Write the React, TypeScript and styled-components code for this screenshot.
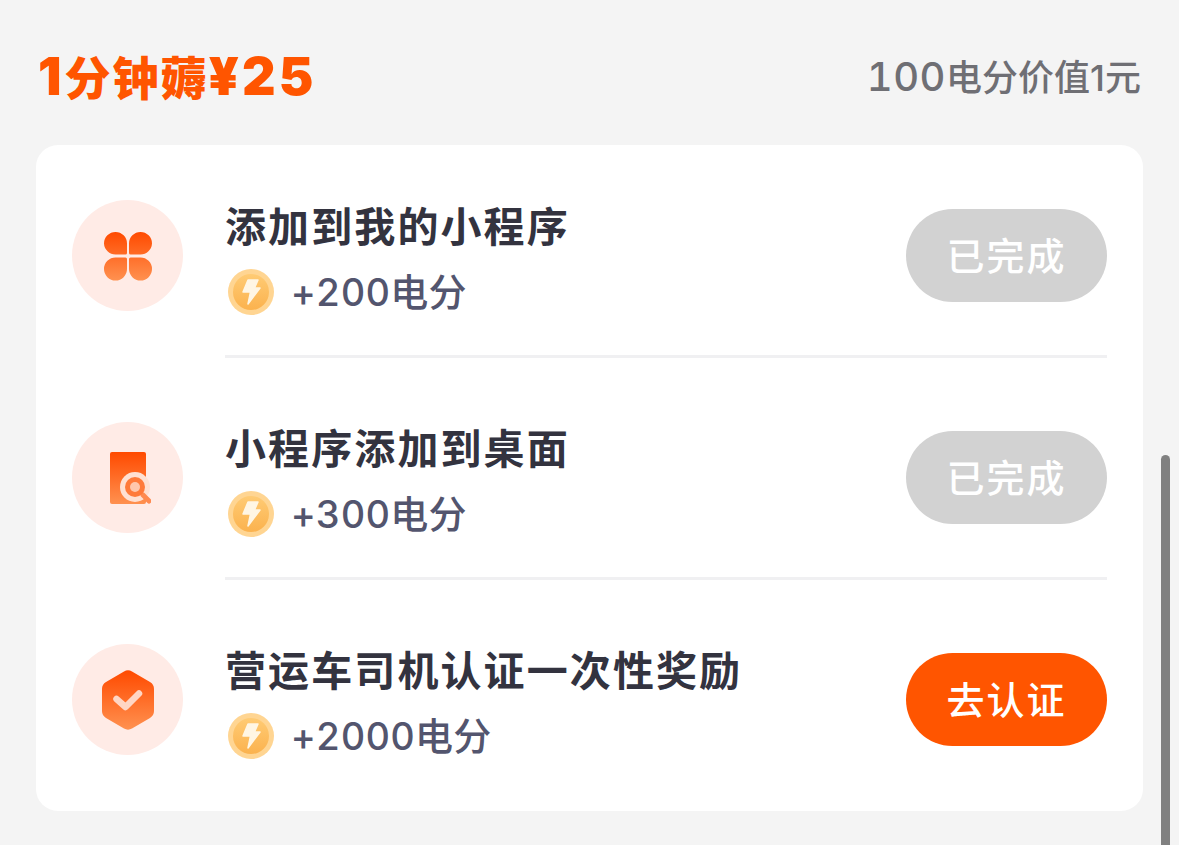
import React from "react";
import styled, { createGlobalStyle } from "styled-components";

const GlobalStyle = createGlobalStyle`
  html, body {
    margin: 0;
    padding: 0;
    height: 100%;
    overflow: hidden;
    background: #f4f4f4;
    font-family: Inter, "Noto Sans CJK SC", sans-serif;
  }
`;

const Page = styled.div`
  position: relative;
  width: 1179px;
  height: 845px;
  overflow: hidden;
  box-sizing: border-box;
  padding: 42px 36px 0;
  background: #f4f4f4;
`;

const Header = styled.div`
  display: flex;
  justify-content: space-between;
  align-items: center;
  height: 66px;
  padding: 0 2px;
  margin-bottom: 37px;
`;

const Title = styled.div`
  font-size: 46px;
  font-weight: 900;
  letter-spacing: 2px;
  color: #ff5500;
  white-space: nowrap;
`;

const TitleNumber = styled.span`
  font-size: 52px;
  letter-spacing: 3px;
`;

const Rate = styled.div`
  font-size: 36px;
  font-weight: 500;
  color: #6f6f74;
  white-space: nowrap;
`;

const RateNumber = styled.span`
  font-size: 40px;
  letter-spacing: 0.500px;
  font-variant-numeric: tabular-nums;
`;

const Card = styled.div`
  width: 1107px;
  height: 666px;
  box-sizing: border-box;
  padding: 9px 36px 0;
  background: #fff;
  border-radius: 22px;
`;

const Row = styled.div`
  display: flex;
  align-items: center;
  height: 204px;
  padding-bottom: 1px;
  margin-bottom: 18px;
  box-sizing: border-box;
`;

const Badge = styled.div`
  flex: none;
  width: 111px;
  height: 111px;
  margin-right: 42px;
  border-radius: 50%;
  background: #ffebe6;
  display: flex;
  align-items: center;
  justify-content: center;
`;

const Body = styled.div<{ $last?: boolean }>`
  flex: 1;
  height: 204px;
  margin-bottom: -1px;
  padding-top: 2px;
  display: flex;
  align-items: center;
  box-sizing: border-box;
  border-bottom: 3px solid ${(p) => (p.$last ? "transparent" : "#f0f0f2")};
`;

const Info = styled.div`
  flex: 1;
  min-width: 0;
  padding-top: 4px;
`;

const ItemTitle = styled.div`
  font-size: 41px;
  line-height: 54px;
  letter-spacing: 2.100px;
  font-weight: 700;
  color: #33333f;
  white-space: nowrap;
`;

const Reward = styled.div`
  display: flex;
  align-items: center;
  gap: 17px;
  margin-top: 15px;
  margin-left: 3px;
  font-size: 38px;
  line-height: 46px;
  letter-spacing: 0.200px;
  font-weight: 500;
  font-variant-numeric: tabular-nums;
  color: #53556e;
`;

const ActionButton = styled.div<{ $done?: boolean }>`
  flex: none;
  width: 201px;
  height: 93px;
  padding-bottom: 5px;
  box-sizing: border-box;
  border-radius: 47px;
  display: flex;
  align-items: center;
  justify-content: center;
  font-size: 38px;
  letter-spacing: 2px;
  font-weight: 500;
  color: #fff;
  background: ${(p) => (p.$done ? "#d2d2d2" : "#ff5500")};
`;

const ScrollThumb = styled.div`
  position: absolute;
  left: 1161px;
  top: 455px;
  width: 9px;
  height: 400px;
  border-radius: 5px;
  background: #808080;
`;

const IconGradient = ({ id }: { id: string }) => (
  <defs>
    <linearGradient id={id} x1="0" y1="0" x2="0" y2="1">
      <stop offset="0" stopColor="#ff4a00" />
      <stop offset="1" stopColor="#ff9150" />
    </linearGradient>
  </defs>
);

const CloverIcon = () => (
  <svg width="50" height="50" viewBox="0 0 50 50">
    <IconGradient id="clover" />
    <path
      fill="url(#clover)"
      d="M1 12.500a11.500 11.500 0 0 1 23 0V22a1.500 1.500 0 0 1-1.500 1.500h-10A11.500 11.500 0 0 1 1 12.500zM49 12.500a11.500 11.500 0 0 0-23 0V22a1.500 1.500 0 0 0 1.500 1.500h10A11.500 11.500 0 0 0 49 12.500zM1 38a11.500 11.500 0 0 1 11.500-11.500h10A1.500 1.500 0 0 1 24 28v10a11.500 11.500 0 0 1-23 0zM49 38a11.500 11.500 0 0 0-11.500-11.500h-10A1.500 1.500 0 0 0 26 28v10a11.500 11.500 0 0 0 23 0z"
    />
  </svg>
);

const SearchDocIcon = () => (
  <svg width="46" height="54" viewBox="-5 0 46 54">
    <IconGradient id="doc" />
    <path
      fill="url(#doc)"
      d="M2 1h32a2 2 0 0 1 2 2v48a2 2 0 0 1-2 2H2a2 2 0 0 1-2-2V3a2 2 0 0 1 2-2z"
    />
    <circle cx="25" cy="36" r="15" fill="#ffe0d2" />
    <path d="M33 44l6 6" stroke="#ff8a50" strokeWidth="5" strokeLinecap="round" />
    <circle cx="25" cy="36" r="10" fill="#ff7a3a" />
    <circle cx="25" cy="36" r="5" fill="#ffc7ac" />
  </svg>
);

const ShieldIcon = () => (
  <svg width="54" height="60" viewBox="0 0 54 60">
    <IconGradient id="shield" />
    <path
      fill="url(#shield)"
      d="M23 1.500a8 8 0 0 1 8 0l18 10.500a8 8 0 0 1 4 7v22a8 8 0 0 1-4 7L31 58.500a8 8 0 0 1-8 0L5 48a8 8 0 0 1-4-7V19a8 8 0 0 1 4-7z"
    />
    <path
      d="M15.500 29l9 8L38 23.500"
      fill="none"
      stroke="#ffd6c4"
      strokeWidth="6.500"
      strokeLinecap="round"
      strokeLinejoin="round"
    />
  </svg>
);

const CoinIcon = () => (
  <svg width="46" height="46" viewBox="0 0 46 46" style={{ flex: "none" }}>
    <defs>
      <linearGradient id="coin" x1="0" y1="0" x2="0" y2="1">
        <stop offset="0" stopColor="#ffcb74" />
        <stop offset="1" stopColor="#fbb24e" />
      </linearGradient>
    </defs>
    <circle cx="23" cy="23" r="23" fill="#ffd592" />
    <circle cx="23" cy="23" r="18" fill="url(#coin)" />
    <path
      fill="#fff6e4"
      strokeLinejoin="round"
      stroke="#fff6e4"
      strokeWidth="1.500"
      d="M20 11h10l-3.500 8H32L20 35l2.500-12H15z"
    />
  </svg>
);

const tasks = [
  { title: "添加到我的小程序", points: "+200电分", action: "已完成", done: true, icon: <CloverIcon /> },
  { title: "小程序添加到桌面", points: "+300电分", action: "已完成", done: true, icon: <SearchDocIcon /> },
  { title: "营运车司机认证一次性奖励", points: "+2000电分", action: "去认证", done: false, icon: <ShieldIcon /> },
];

export default function App() {
  return (
    <>
      <GlobalStyle />
      <Page>
        <Header>
          <Title>
            <TitleNumber>1</TitleNumber>分钟薅<TitleNumber>¥25</TitleNumber>
          </Title>
          <Rate>
            <RateNumber>100</RateNumber>电分价值1元
          </Rate>
        </Header>
        <Card>
          {tasks.map((task, i) => (
            <Row key={task.title}>
              <Badge>{task.icon}</Badge>
              <Body $last={i === tasks.length - 1}>
                <Info>
                  <ItemTitle>{task.title}</ItemTitle>
                  <Reward>
                    <CoinIcon />
                    {task.points}
                  </Reward>
                </Info>
                <ActionButton $done={task.done}>{task.action}</ActionButton>
              </Body>
            </Row>
          ))}
        </Card>
        <ScrollThumb />
      </Page>
    </>
  );
}
